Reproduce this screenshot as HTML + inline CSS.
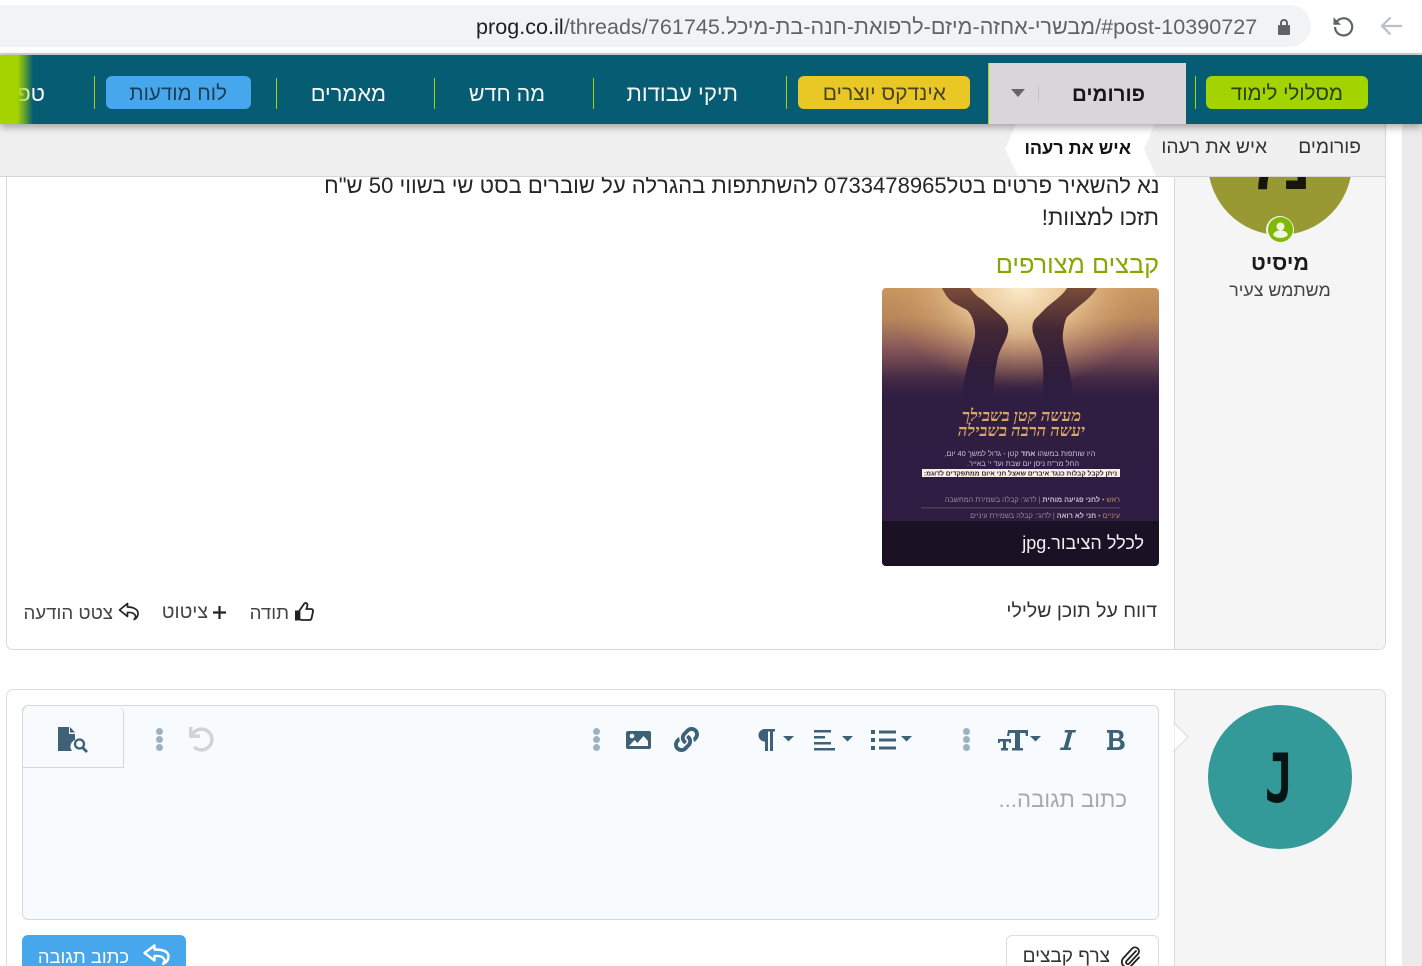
<!DOCTYPE html>
<html lang="he" dir="ltr">
<head>
<meta charset="utf-8">
<title>prog.co.il</title>
<style>
html,body{margin:0;padding:0;width:1422px;height:966px;overflow:hidden;background:#fff}
body{position:relative;font-family:"Liberation Sans",sans-serif;color:#222}
.a{position:absolute;box-sizing:border-box}
.t{position:absolute;white-space:nowrap;direction:rtl;unicode-bidi:isolate}
.sep{position:absolute;width:1px;background:#a5d400}
.btn{position:absolute;border-radius:6px;height:33px;top:76px}
svg{position:absolute;overflow:visible}
.ico{fill:#3f6178}
.dots i{position:absolute;left:0;width:7px;height:7px;border-radius:50%;background:#9db2c1}
</style>
</head>
<body>

<!-- browser chrome -->
<div class="a" style="left:0;top:5px;width:1311px;height:42px;background:#f1f3f4;border-radius:0 21px 21px 0"></div>
<div class="t" style="left:476px;top:14px;font-size:21.5px;line-height:26px;color:#5f6368;direction:ltr;unicode-bidi:normal;letter-spacing:.05px"><span style="color:#202124">prog.co.il</span>/threads/761745.<span style="unicode-bidi:isolate;direction:rtl">מבשרי-אחזה-מיזם-לרפואת-חנה-בת-מיכל</span>/#post-10390727</div>
<svg style="left:1277px;top:18px" width="14" height="18" viewBox="0 0 14 18"><path fill="#5f6368" d="M2 7h1V5a4 4 0 0 1 8 0v2h1a1 1 0 0 1 1 1v8a1 1 0 0 1-1 1H2a1 1 0 0 1-1-1V8a1 1 0 0 1 1-1zM5 7h4V5a2 2 0 0 0-4 0z"/></svg>
<svg style="left:1331px;top:14px" width="24" height="24" viewBox="0 0 24 24"><path fill="none" stroke="#5f6368" stroke-width="2.2" d="M5.2 8.5A8.6 8.6 0 1 1 4 13"/><path fill="#5f6368" d="M2.5 3.2v7.6h7.6z"/></svg>
<svg style="left:1379px;top:14px" width="24" height="24" viewBox="0 0 24 24"><path fill="none" stroke="#bcc0c4" stroke-width="2.2" d="M23 12H3M11.5 3.5 3 12l8.500 8.500"/></svg>
<div class="a" style="left:0;top:53px;width:1422px;height:2px;background:#d3d5d7"></div>

<!-- side strip -->
<div class="a" style="left:1402px;top:124px;width:20px;height:842px;background:#ebebeb"></div>

<!-- first post card -->
<div class="a" style="left:6px;top:177px;width:1380px;height:473px;border:1px solid #d8d8d8;border-top:0;border-radius:0 0 7px 7px;background:#fff"></div>
<div class="a" style="left:1174px;top:177px;width:211px;height:472px;background:#f5f5f5;border-left:1px solid #d8d8d8;border-radius:0 0 6px 0"></div>

<div class="a" style="left:1208px;top:91px;width:144px;height:144px;border-radius:50%;background:#999933;clip-path:inset(86px 0 0 0)"></div>
<div class="t" style="left:1208px;width:144px;text-align:center;top:123px;font-size:72px;line-height:84px;font-weight:bold;color:#15150a;clip-path:inset(54px 0 0 0);transform:scaleX(.87)">נ7</div>
<div class="a" style="left:1266px;top:216px;width:28px;height:28px;border-radius:50%;background:#f5f5f5"></div>
<svg style="left:1268px;top:217px" width="25" height="25" viewBox="0 0 25 25"><circle cx="12.500" cy="12.500" r="12.500" fill="#7fb900"/><circle cx="12.500" cy="9.500" r="4" fill="#f1f6e2"/><path fill="#f1f6e2" d="M5 18c1-3.500 4-4.500 7.500-4.500S19 14.500 20 18c-2 2-4.500 3-7.500 3S7 20 5 18z"/></svg>
<div class="t" style="left:1174px;width:212px;text-align:center;top:250px;font-size:21.5px;line-height:27px;font-weight:bold;color:#1a1a1a">מיסיט</div>
<div class="t" style="left:1174px;width:212px;text-align:center;top:279px;font-size:17.800px;line-height:22px;color:#444">משתמש צעיר</div>

<div class="t" style="right:263px;top:171px;font-size:22.500px;line-height:30px;color:#262626;transform:scaleX(.981);transform-origin:right center">נא להשאיר פרטים בטל0733478965 להשתתפות בהגרלה על שוברים בסט שי בשווי 50 ש"ח</div>
<div class="t" style="right:263px;top:203px;font-size:22.500px;line-height:30px;color:#262626;transform:scaleX(.985);transform-origin:right center">תזכו למצוות!</div>
<div class="t" style="right:263px;top:250px;font-size:25.300px;line-height:31px;color:#84a800">קבצים מצורפים</div>

<!-- attachment image -->
<svg style="left:882px;top:288px" width="277" height="278" viewBox="0 0 277 278">
<defs>
<linearGradient id="bg" x1="0" y1="0" x2="0" y2="1"><stop offset="0" stop-color="#c9975f"/><stop offset=".11" stop-color="#b8865a"/><stop offset=".22" stop-color="#85565a"/><stop offset=".33" stop-color="#432944"/><stop offset=".39" stop-color="#2f1d42"/><stop offset="1" stop-color="#2e1c41"/></linearGradient>
<radialGradient id="gl" cx=".5" cy=".5" r=".5"><stop offset="0" stop-color="#fbeccb"/><stop offset=".45" stop-color="#ecc896" stop-opacity=".8"/><stop offset="1" stop-color="#c58a55" stop-opacity="0"/></radialGradient>
<linearGradient id="hd" gradientUnits="userSpaceOnUse" x1="0" y1="0" x2="0" y2="108"><stop offset="0" stop-color="#7a4c38"/><stop offset=".4" stop-color="#422635"/><stop offset=".75" stop-color="#2f1d3a"/><stop offset="1" stop-color="#2f1d42"/></linearGradient>
<clipPath id="cp"><rect width="277" height="278" rx="4"/></clipPath>
</defs>
<g clip-path="url(#cp)">
<rect width="277" height="278" fill="url(#bg)"/>
<ellipse cx="138" cy="0" rx="135" ry="100" fill="url(#gl)"/>
<path fill="url(#hd)" d="M60 0H88C92 6 96 9 101 12L120 29C125 34 127 38 126 44 124 54 118 60 116 69 113 82 112 94 111 108H81C81 94 84 84 86 75 89 62 94 52 93 42 92 33 90 27 85 22 78 18 72 16 68 12 64 8 62 4 60 0Z"/>
<path fill="url(#hd)" d="M215 0H185C181 7 172 13 165 19L153 31C150 35 150 40 151 45 154 55 159 61 160 69 162 82 161 94 161 108H191C190 94 188 84 185 72 183 62 180 54 181 45 182 37 183 33 185 29 191 23 196 19 201 15 207 10 212 5 215 0Z"/>
<text x="139.500" y="133" text-anchor="middle" font-family="'Liberation Serif',serif" font-style="italic" font-weight="bold" font-size="16.500" fill="#d9a766" direction="rtl">מעשה קטן בשבילך</text>
<text x="139.500" y="148" text-anchor="middle" font-family="'Liberation Serif',serif" font-style="italic" font-weight="bold" font-size="16.500" fill="#d9a766" direction="rtl">יעשה הרבה בשבילה</text>
<text x="138" y="168" text-anchor="middle" font-size="7.400" fill="#c9bfc9" direction="rtl">היו שותפות במשהו <tspan font-weight="bold">אחד</tspan> קטן - גדול למשך 40 יום,</text>
<text x="141" y="178" text-anchor="middle" font-size="7.400" fill="#c9bfc9" direction="rtl">החל מר"ח ניסן יום שבת ועד י' באייר.</text>
<rect x="40" y="181" width="198" height="8" fill="#f7efe4"/>
<text x="138.500" y="187.500" text-anchor="middle" font-size="6.700" font-weight="bold" fill="#2b1b3b" direction="rtl">ניתן לקבל קבלות כנגד איברים שאצל חני איום ממתפקדים לדוגמ:</text>
<text x="238" y="214" text-anchor="start" font-size="7.200" fill="#9c8b9c" direction="rtl"><tspan fill="#b98a5e">ראש</tspan> • <tspan font-weight="bold" fill="#c9bfc9">לחני פגיעה מוחית</tspan> | לדוג': קבלה בשמירת המחשבה</text>
<rect x="39" y="219" width="199" height="1.500" fill="#4e3d58"/>
<text x="238" y="230" text-anchor="start" font-size="7.200" fill="#9c8b9c" direction="rtl"><tspan fill="#b98a5e">עיניים</tspan> • <tspan font-weight="bold" fill="#c9bfc9">חני לא רואה</tspan> | לדוג': קבלה בשמירת עיניים</text>
<rect y="233" width="277" height="45" fill="#1a1124"/>
</g>
</svg>
<div class="t" style="right:278px;top:531px;font-size:18px;line-height:24px;color:#f2f2f2">לכלל הציבור.jpg</div>

<!-- post actions -->
<div class="t" style="right:265px;top:600px;font-size:19.500px;line-height:23px;color:#333">דווח על תוכן שלילי</div>
<div class="t" style="right:1133px;top:601px;font-size:18.700px;line-height:23px;color:#444">תודה</div>
<svg style="left:294px;top:601px" width="20" height="21" viewBox="0 0 20 21"><path fill="none" stroke="#222" stroke-width="1.800" d="M5.500 9.500 10 3c.6-1.300 3-1.500 3.400.5.300 1.500-.6 3-1 4.500H17c1.500 0 2.300 1.300 2 2.500l-1.500 7c-.3 1-1 1.500-2 1.500H8c-1.300 0-2-.6-2.500-1z"/><rect x="1" y="9.500" width="4.500" height="10" fill="#222"/></svg>
<div class="t" style="right:1214px;top:601px;font-size:19.500px;line-height:23px;color:#444">ציטוט</div>
<svg style="left:212px;top:605px" width="15" height="15" viewBox="0 0 15 15"><path fill="none" stroke="#222" stroke-width="2.200" d="M7.500 1v13M1 7.500h13"/></svg>
<div class="t" style="right:1309px;top:601px;font-size:18.700px;line-height:23px;color:#444">צטט הודעה</div>
<svg style="left:118px;top:602px" width="21" height="19" viewBox="0 0 21 19"><path fill="none" stroke="#222" stroke-width="1.700" stroke-linejoin="round" d="M9.500 1.500 1.500 8l8 6.500V10.500c4-.3 7 .3 8 3.500.3 1-.4 2.500-1.300 3.500 2.500-1.300 3.800-3.500 3.800-6 0-4.500-5-6.500-10.500-6.500z"/></svg>

<!-- reply card -->
<div class="a" style="left:6px;top:689px;width:1380px;height:290px;border:1px solid #dcdcdc;border-radius:7px;background:#fff"></div>
<div class="a" style="left:1174px;top:690px;width:211px;height:280px;background:#f5f5f5;border-left:1px solid #dcdcdc;border-radius:0 6px 0 0"></div>
<svg style="left:1174px;top:722px" width="16" height="30" viewBox="0 0 16 30"><path fill="#fff" stroke="#dcdcdc" d="M0 1 14 15 0 29z"/><path fill="#fff" d="M-1 2h1v26h-1z"/></svg>
<div class="a" style="left:1208px;top:705px;width:144px;height:144px;border-radius:50%;background:#339999"></div>
<div class="t" style="left:1209px;width:140px;text-align:center;top:738px;font-size:68px;line-height:84px;font-weight:bold;color:#071414;font-family:'DejaVu Sans Mono',monospace;direction:ltr;transform:scaleX(.7)">J</div>

<!-- editor -->
<div class="a" style="left:22px;top:705px;width:1137px;height:215px;border:1px solid #d8d8d8;border-radius:6px;background:#f8fbfe"></div>
<div class="a" style="left:22px;top:707px;width:102px;height:61px;border-right:1px solid #d8d8d8;border-bottom:1px solid #d8d8d8;border-left:1px solid #d8d8d8;border-radius:6px 6px 0 0;background:#f8fbfe"></div>

<!-- preview icon -->
<svg style="left:58px;top:727px" width="30" height="26" viewBox="0 0 30 26"><path class="ico" d="M0 0h11v7h6v6a7 7 0 0 0-3 11v0H0zM12 0l5 5.500h-5z"/><circle cx="21.500" cy="17" r="4.500" fill="none" stroke="#3f6178" stroke-width="2.300"/><path stroke="#3f6178" stroke-width="2.800" d="M24.500 20.500 29 25"/></svg>
<div class="a dots" style="left:156px;top:728px;width:7px;height:24px"><i style="top:0"></i><i style="top:8px"></i><i style="top:16px"></i></div>
<svg style="left:189px;top:727px" width="25" height="25" viewBox="0 0 512 512"><path fill="#d2d3d4" d="M212.333 224.333H12c-6.627 0-12-5.373-12-12V12C0 5.373 5.373 0 12 0h48c6.627 0 12 5.373 12 12v78.112C117.773 39.279 184.26 7.47 258.175 8.007c136.906.994 246.448 111.623 246.157 248.532C504.041 393.258 393.12 504 256.333 504c-64.089 0-122.496-24.313-166.51-64.215-5.099-4.622-5.334-12.554-.467-17.42l33.967-33.967c4.474-4.474 11.662-4.717 16.401-.525C170.76 415.336 211.58 432 256.333 432c97.268 0 176-78.716 176-176 0-97.267-78.716-176-176-176-58.496 0-110.28 28.476-142.274 72.333h98.274c6.627 0 12 5.373 12 12v48c0 6.627-5.373 12-12 12z"/></svg>

<div class="a dots" style="left:593px;top:728px;width:7px;height:24px"><i style="top:0"></i><i style="top:8px"></i><i style="top:16px"></i></div>
<svg style="left:626px;top:731px" width="25" height="18" viewBox="0 0 25 18"><path class="ico" fill-rule="evenodd" d="M2 0h21a2 2 0 0 1 2 2v14a2 2 0 0 1-2 2H2a2 2 0 0 1-2-2V2a2 2 0 0 1 2-2zM3 15h19V10l-4.500-5-6 7-3-3z"/><circle cx="6" cy="5" r="2.300" fill="#f8fbfe"/></svg>
<svg style="left:674px;top:727px" width="25" height="25" viewBox="0 0 512 512"><path class="ico" d="M326.612 185.391c59.747 59.809 58.927 155.698.36 214.59-.11.12-.24.25-.36.37l-67.2 67.2c-59.27 59.27-155.699 59.262-214.96 0-59.27-59.26-59.27-155.7 0-214.96l37.106-37.106c9.84-9.84 26.786-3.3 27.294 10.606.648 17.722 3.826 35.527 9.69 52.721 1.986 5.822.567 12.262-3.783 16.612l-13.087 13.087c-28.026 28.026-28.905 73.66-1.155 101.96 28.024 28.579 74.086 28.749 102.325.51l67.2-67.19c28.191-28.191 28.073-73.757 0-101.83-3.701-3.694-7.429-6.564-10.341-8.569a16.037 16.037 0 0 1-6.947-12.606c-.396-10.567 3.348-21.456 11.698-29.806l21.054-21.055c5.521-5.521 14.182-6.199 20.584-1.731a152.482 152.482 0 0 1 20.522 17.197zM467.547 44.449c-59.261-59.262-155.69-59.27-214.96 0l-67.2 67.2c-.12.12-.25.25-.36.37-58.566 58.892-59.387 154.781.36 214.59a152.454 152.454 0 0 0 20.521 17.196c6.402 4.468 15.064 3.789 20.584-1.731l21.054-21.055c8.35-8.35 12.094-19.239 11.698-29.806a16.037 16.037 0 0 0-6.947-12.606c-2.912-2.005-6.64-4.875-10.341-8.569-28.073-28.073-28.191-73.639 0-101.83l67.2-67.19c28.239-28.239 74.3-28.069 102.325.51 27.75 28.3 26.872 73.934-1.155 101.96l-13.087 13.087c-4.35 4.35-5.769 10.79-3.783 16.612 5.864 17.194 9.042 34.999 9.69 52.721.509 13.906 17.454 20.446 27.294 10.606l37.106-37.106c59.271-59.259 59.271-155.699.001-214.959z"/></svg>

<svg style="left:756px;top:729px" width="38" height="22" viewBox="0 0 38 22"><path class="ico" d="M8 0h11v2.500h-2V22h-3V2.500h-2V22H9V12.500H8a6.300 6.300 0 0 1 0-12.500z"/><path class="ico" d="M27 7h11l-5.500 5.500z"/></svg>
<svg style="left:814px;top:729px" width="40" height="22" viewBox="0 0 40 22"><path class="ico" d="M0 1h17v2.500H0zM0 7h11v2.500H0zM0 13h17v2.500H0zM0 19h21v2.500H0zM28 7h11l-5.500 5.500z"/></svg>
<svg style="left:871px;top:729px" width="42" height="22" viewBox="0 0 42 22"><path class="ico" d="M0 1h4v4H0zM8 1.500h17v3H8zM0 9h4v4H0zM8 9.500h17v3H8zM0 17h4v4H0zM8 17.500h17v3H8zM30 7h11l-5.500 5.500z"/></svg>

<div class="a dots" style="left:963px;top:728px;width:7px;height:24px"><i style="top:0"></i><i style="top:8px"></i><i style="top:16px"></i></div>
<svg style="left:998px;top:729px" width="44" height="22" viewBox="0 0 44 22"><path class="ico" d="M10 1h20v6h-2.200l-.5-3H22v15h3v2.500H14V19h3V4h-5.300l-.5 3H9zM0 10h13v4h-1.700l-.4-1.500H8V19h2v2.500H3V19h2v-6.500H2L1.700 14H0zM32 7h11l-5.500 5.500z"/></svg>
<svg style="left:1060px;top:729px" width="16" height="22" viewBox="0 0 16 22"><path class="ico" d="M5 1h11l-.5 2.500h-3.300L8 18.500h3.200L10.700 21H0l.5-2.500h3.300L8 3.500H4.500z"/></svg>
<svg style="left:1107px;top:729px" width="18" height="22" viewBox="0 0 18 22"><path class="ico" fill-rule="evenodd" d="M0 1h10c4.300 0 6.500 2 6.500 5.200 0 2.100-1 3.600-2.800 4.400 2.500.7 4 2.400 4 5 0 3.500-2.700 5.400-6.700 5.400H0v-2.700h2.200V3.700H0zM6 3.900v5.400h3.500c2 0 3-1 3-2.800 0-1.700-1-2.600-3-2.600zM6 12v6.200h4c2.200 0 3.400-1 3.400-3.100 0-2.100-1.200-3.100-3.400-3.100z"/></svg>

<div class="t" style="right:295px;top:786px;font-size:22.200px;line-height:28px;color:#a8a8a8">כתוב תגובה...</div>

<!-- buttons -->
<div class="a" style="left:22px;top:935px;width:164px;height:40px;background:#47a7ec;border-radius:6px"></div>
<div class="t" style="right:1293px;top:945px;font-size:18.400px;line-height:24px;color:#fff">כתוב תגובה</div>
<svg style="left:143px;top:944px" width="28" height="24" viewBox="0 0 28 24"><path fill="none" stroke="#fff" stroke-width="2.400" stroke-linejoin="round" d="M11.500 1.500 1.500 9l10 7.500v-4.500c5-.3 8.500.3 10 3.500.5 1.200-.5 3-1.500 4.500 3.500-1.500 5.500-4 5.500-7.500 0-5-6-7-14-7z"/></svg>

<div class="a" style="left:1006px;top:935px;width:153px;height:40px;background:#fff;border:1px solid #dcdcdc;border-radius:6px"></div>
<div class="t" style="right:312px;top:945px;font-size:19px;line-height:24px;color:#333">צרף קבצים</div>
<svg style="left:1119px;top:944px" width="24" height="24" viewBox="0 0 24 24"><path fill="none" stroke="#222" stroke-width="1.800" stroke-linecap="round" d="M17 7 7.500 17a1.800 1.800 0 0 0 2.700 2.500l9-9.800a4 4 0 0 0-5.700-5.500L4 14.500a5.500 5.500 0 0 0 8 7.500l8-8.500"/></svg>

<!-- breadcrumb -->
<div class="a" style="left:0;top:124px;width:1386px;height:53px;background:#f0f0f0;border-bottom:1px solid #d6d6d6;border-right:1px solid #d6d6d6"></div>
<svg style="left:0;top:0" width="1422" height="966" viewBox="0 0 1422 966"><path fill="#fff" d="M1016 124H1155L1144 149 1156 176H1018L1005 149z"/></svg>
<div class="t" style="right:61px;top:136px;font-size:19.200px;line-height:24px;color:#333">פורומים</div>
<div class="t" style="right:155px;top:136px;font-size:19.200px;line-height:24px;color:#333">איש את רעהו</div>
<div class="t" style="right:291px;top:136px;font-size:18px;line-height:24px;font-weight:bold;color:#111">איש את רעהו</div>

<!-- nav -->
<div class="a" style="left:0;top:55px;width:1422px;height:69px;background:#055c73;box-shadow:0 3px 8px rgba(0,0,0,.35)"></div>

<div class="btn" style="left:1206px;width:162px;background:#a3d300"></div>
<div class="t" style="right:79px;top:81px;font-size:20.500px;line-height:25px;color:#2e3f10">מסלולי לימוד</div>
<div class="sep" style="left:1195px;top:76px;height:33px"></div>

<div class="a" style="left:988px;top:63px;width:198px;height:61px;background:#d8d6d8;border-left:1px solid #a5d400"></div>
<div class="t" style="right:277px;top:82px;font-size:20.500px;line-height:26px;font-weight:bold;color:#151515">פורומים</div>
<div class="a" style="left:1038px;top:85px;width:1px;height:17px;background:#bcc4cc"></div>
<svg style="left:1011px;top:89px" width="14" height="8" viewBox="0 0 14 8"><path fill="#666" d="M0 0h14L7 8z"/></svg>

<div class="btn" style="left:798px;width:172px;background:#e9c825"></div>
<div class="t" style="right:476px;top:81px;font-size:21px;line-height:25px;color:#4a4320">אינדקס יוצרים</div>
<div class="sep" style="left:786px;top:76px;height:33px"></div>

<div class="t" style="right:684px;top:81px;font-size:22.200px;line-height:26px;color:#f6f6f6">תיקי עבודות</div>
<div class="sep" style="left:593px;top:78px;height:31px"></div>
<div class="t" style="right:877px;top:81px;font-size:21.500px;line-height:26px;color:#f6f6f6">מה חדש</div>
<div class="sep" style="left:434px;top:78px;height:31px"></div>
<div class="t" style="right:1036px;top:81px;font-size:21.800px;line-height:26px;color:#f6f6f6">מאמרים</div>
<div class="sep" style="left:276px;top:78px;height:31px"></div>
<div class="btn" style="left:106px;width:145px;background:#47a7ec"></div>
<div class="t" style="right:1195px;top:81px;font-size:20.500px;line-height:25px;color:#1d3d55">לוח מודעות</div>
<div class="sep" style="left:94px;top:76px;height:33px"></div>
<div class="t" style="right:1377px;top:81px;font-size:22px;line-height:26px;color:#f6f6f6">טפסים</div>
<div class="a" style="left:0;top:55px;width:33px;height:69px;background:linear-gradient(90deg,#a6d400 0,#a6d400 52%,rgba(166,212,0,.55) 76%,rgba(166,212,0,0) 100%)"></div>

</body>
</html>
